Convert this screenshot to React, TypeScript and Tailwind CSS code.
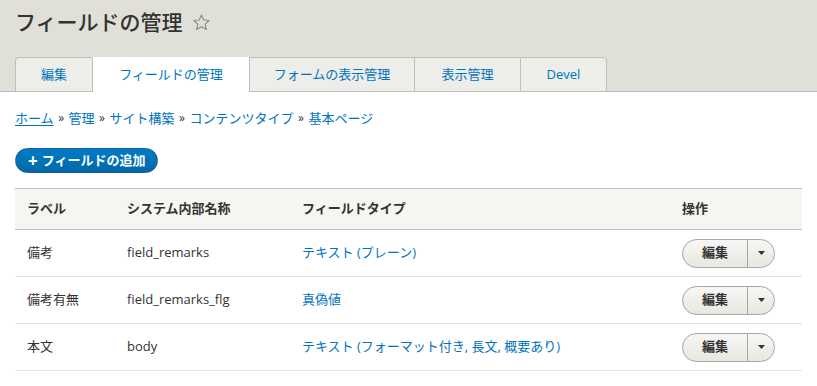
import React from 'react';

const tabs = [
  { label: '編集', w: 'w-[77px]' },
  { label: 'フィールドの管理', w: 'w-[157px]', active: true },
  { label: 'フォームの表示管理', w: 'w-[165px]' },
  { label: '表示管理', w: 'w-[106px]' },
  { label: 'Devel', w: 'w-[87px]' },
];

const crumbs = ['管理', 'サイト構築', 'コンテンツタイプ', '基本ページ'];

const rows = [
  { label: '備考', name: 'field_remarks', type: 'テキスト (プレーン)' },
  { label: '備考有無', name: 'field_remarks_flg', type: '真偽値' },
  { label: '本文', name: 'body', type: 'テキスト (フォーマット付き, 長文, 概要あり)' },
];

function Star() {
  return (
    <svg width="19" height="19" viewBox="0 0 24 24" fill="none" stroke="#8a8a86" strokeWidth="1.4" strokeLinejoin="round">
      <path d="M12 2.5l2.9 6.3 6.8.7-5.1 4.6 1.5 6.7L12 17.4l-6.1 3.4 1.5-6.7-5.1-4.6 6.8-.7z" />
    </svg>
  );
}

function ActionButton() {
  return (
    <div className="flex h-[29px] w-[93px] rounded-full border border-[#a6a6a6] bg-gradient-to-b from-[#f7f7f4] to-[#e8e7e1] overflow-hidden">
      <button className="flex-1 text-[13px] font-bold text-[#333]">編集</button>
      <button className="w-[27px] border-l border-[#a6a6a6] flex items-center justify-center">
        <svg width="7" height="4" viewBox="0 0 7 4">
          <path d="M0 0h7L3.5 4z" fill="#333" />
        </svg>
      </button>
    </div>
  );
}

export default function App() {
  return (
    <div className="min-h-screen bg-white text-[#333]" style={{ fontFamily: '"Open Sans", "Noto Sans CJK JP", sans-serif' }}>

      {/* Page header + tabs */}
      <div className="bg-[#e0e0d8] border-b border-[#bfbfba] px-[15px] pt-[8px]">
        <h1 className="flex items-center gap-[9px] h-[28px] text-[21px] font-medium text-[#333] leading-none">
          フィールドの管理
          <Star />
        </h1>
        <ul className="flex mt-[21px] -mb-px">
          {tabs.map((t, i) => (
            <li key={t.label}
              className={`${t.w} h-[35px] flex items-center justify-center text-[13px] border-t border-[#bfbfba] ${i === 0 ? 'border-l rounded-tl-[4px]' : 'border-l'} ${i === tabs.length - 1 ? 'border-r rounded-tr-[4px]' : ''} ${t.active ? 'bg-white border-t-white border-l-[#bfbfba]' : 'bg-[#ededea] border-b border-b-[#bfbfba]'} text-[#0074bd]`}>
              {t.label}
            </li>
          ))}
        </ul>
      </div>

      <div className="px-[15px]">
        {/* Breadcrumb */}
        <div className="pt-[17px] text-[13px] leading-[18px] flex items-center gap-[4.5px]">
          <a className="text-[#0074bd] underline underline-offset-2">ホーム</a>
          {crumbs.map(c => (
            <React.Fragment key={c}>
              <span className="text-[#333] text-[12px]">»</span>
              <a className="text-[#0074bd]">{c}</a>
            </React.Fragment>
          ))}
        </div>

        {/* Add field */}
        <button className="mt-[21px] h-[25px] px-[12px] rounded-full bg-gradient-to-b from-[#007bc6] to-[#0069ab] border border-[#1e5c90] text-white text-[13px] font-bold flex items-center gap-[4px]">
          <span className="text-[17px] leading-none font-bold">+</span>フィールドの追加
        </button>

        {/* Fields table */}
        <table className="mt-[15px] w-full text-[13px] border-collapse">
          <thead>
            <tr className="bg-[#f5f5f2] border-t border-b border-[#bfbfba] h-[41px] text-left">
              <th className="pl-[12px] w-[112px] font-bold">ラベル</th>
              <th className="w-[175px] font-bold">システム内部名称</th>
              <th className="w-[380px] font-bold">フィールドタイプ</th>
              <th className="font-bold">操作</th>
            </tr>
          </thead>
          <tbody>
            {rows.map(r => (
              <tr key={r.name} className="h-[47px] border-b border-[#e6e4df]">
                <td className="pl-[12px]">{r.label}</td>
                <td>{r.name}</td>
                <td><a className="text-[#0074bd]">{r.type}</a></td>
                <td><ActionButton /></td>
              </tr>
            ))}
          </tbody>
        </table>
      </div>
    </div>
  );
}
